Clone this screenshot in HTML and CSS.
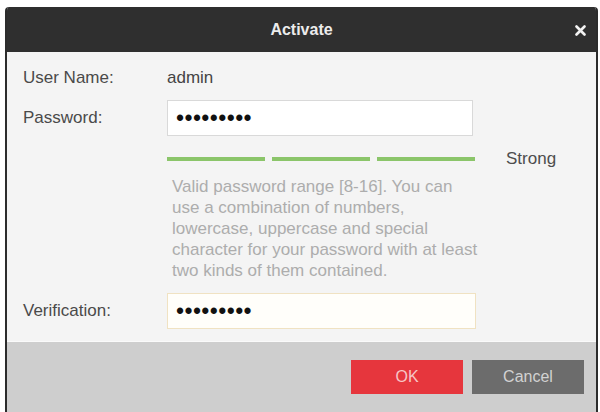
FILE: index.html
```html
<!DOCTYPE html>
<html lang="en-US">
  <head>
    <title>Activate</title>
    <meta charset="utf-8" />
    <meta name="viewport" content="width=device-width, initial-scale=1.0" />
    <link rel="stylesheet" href="styles.css">
  </head>
  <body>
    <div class="dialog">
      <div class="titlebar">
        <h1>Activate</h1>
        <button class="close" type="button" aria-label="Close">
          <svg width="11" height="11" viewBox="0 0 11 11">
            <path d="M1.5 1.5 L9.5 9.5 M9.5 1.5 L1.5 9.5" stroke="#f2f2f2" stroke-width="2.6" stroke-linecap="round" />
          </svg>
        </button>
      </div>
      <form class="content">
        <div class="row user">
          <label>User Name:</label>
          <span class="value">admin</span>
        </div>
        <div class="row pass">
          <label for="pwd">Password:</label>
          <input id="pwd" class="field" type="password" value="abcdefghi" />
        </div>
        <div class="row strength">
          <span></span>
          <div class="bars">
            <i></i><i></i><i></i>
          </div>
          <span class="level">Strong</span>
        </div>
        <div class="row hint">
          <span></span>
          <p>Valid password range [8-16]. You can use a combination of numbers, lowercase, uppercase and special character for your password with at least two kinds of them contained.</p>
        </div>
        <div class="row verify">
          <label for="vrf">Verification:</label>
          <input id="vrf" class="field focus" type="password" value="abcdefghi" />
        </div>
      </form>
      <div class="footer">
        <button class="btn ok" type="button">OK</button>
        <button class="btn cancel" type="button">Cancel</button>
      </div>
    </div>
  </body>
</html>
```

FILE: styles.css
```css
* {
  box-sizing: border-box;
}
body {
  background-color: #fff;
  color: #4a4a4a;
  font: 17px / 1.2 "Liberation Sans", Arial, sans-serif;
  margin: 0;
  padding: 7px 2px 0 5px;
}
.dialog {
  border-left: 2px solid #2c2c2c;
  border-right: 2px solid #2c2c2c;
  border-radius: 4px 4px 0 0;
  overflow: hidden;
}
.titlebar {
  position: relative;
  height: 45px;
  background-color: #2f2f2f;
  display: flex;
  align-items: center;
  justify-content: center;
}
.titlebar h1 {
  margin: 0;
  font-size: 16px;
  font-weight: bold;
  color: #ececec;
}
.close {
  position: absolute;
  right: 10px;
  top: 18px;
  background: none;
  border: none;
  padding: 0;
  width: 11px;
  height: 11px;
  display: flex;
}
.content {
  background-color: #f4f4f4;
  padding: 14px 0 12px 16px;
  margin: 0;
  border-bottom: 1px solid #fafafa;
}
.row {
  display: grid;
  grid-template-columns: 144px 1fr;
  align-items: center;
}
.row label {
  color: #4a4a4a;
}
.user {
  height: 24px;
}
.value {
  color: #444;
}
.pass {
  margin-top: 10px;
}
.field {
  width: 306px;
  height: 36px;
  border: 1px solid #d9d9d9;
  background-color: #fff;
  padding: 0 8px;
  font-family: "Liberation Sans", Arial, sans-serif;
  font-size: 23px;
  letter-spacing: 0.4px;
  color: #111;
  outline: none;
}
.field.focus {
  width: 309px;
  border-color: #f0e2c2;
  background-color: #fffefa;
}
.strength {
  grid-template-columns: 144px 308px 1fr;
  margin-top: 13px;
  height: 10px;
}
.bars {
  display: flex;
  gap: 7px;
}
.bars i {
  flex: 1;
  height: 4px;
  background-color: #8bc56a;
}
.level {
  color: #4d4d4d;
  padding-left: 31px;
}
.hint {
  margin-top: 17px;
}
.hint p {
  margin: 0;
  padding-left: 5px;
  width: 315px;
  color: #adadad;
  line-height: 21px;
}
.verify {
  margin-top: 12px;
}
.footer {
  background-color: #cecece;
  height: 70px;
  display: flex;
  justify-content: flex-end;
  align-items: flex-start;
  gap: 9px;
  padding: 18px 12px 0 0;
}
.btn {
  width: 112px;
  height: 34px;
  border: none;
  font-family: inherit;
  font-size: 16px;
}
.ok {
  background-color: #e6363d;
  color: #f6c6c6;
}
.cancel {
  background-color: #6c6c6c;
  color: #d2d2d2;
}
```
